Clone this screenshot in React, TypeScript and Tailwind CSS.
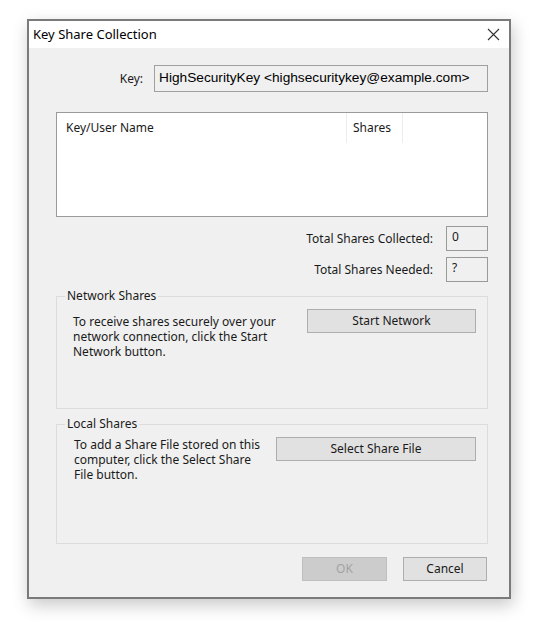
import React from 'react';

// Key share collection dialog (Windows style)

function GroupBox({ title, children, height }: { title: string; children: React.ReactNode; height: string }) {
  return (
    <div className={`relative border border-[#dcdcdc] ${height}`}>
      <span className="absolute -top-[9px] left-[8px] bg-[#f0f0f0] px-[2px] leading-[16px] text-[#1a1a1a]">
        {title}
      </span>
      {children}
    </div>
  );
}

function WinButton({ children, className = '', disabled = false }: { children: React.ReactNode; className?: string; disabled?: boolean }) {
  return (
    <button
      type="button"
      disabled={disabled}
      className={`h-[24px] border text-[12px] ${
        disabled
          ? 'border-[#bfbfbf] bg-[#cccccc] text-[#a3a3a3]'
          : 'border-[#adadad] bg-[#e1e1e1] text-[#1a1a1a]'
      } ${className}`}
    >
      {children}
    </button>
  );
}

export default function App() {
  return (
    <div
      className="min-h-[626px] w-[554px] bg-white pl-[27px] pt-[19px] text-[12px] text-[#1a1a1a]"
      style={{ fontFamily: '"Noto Sans", "Open Sans", sans-serif' }}
    >
      <div className="flex h-[580px] w-[484px] flex-col border-2 border-[#7a7a7a] bg-[#f0f0f0] shadow-[2px_6px_16px_rgba(0,0,0,0.22)]">
        {/* Title bar */}
        <div className="flex h-[27px] items-center justify-between bg-white pl-[4px] pr-[9px]">
          <span className="text-[13px] text-black">Key Share Collection</span>
          <svg width="13" height="13" viewBox="0 0 13 13" className="text-[#333]">
            <path d="M1 1L12 12M12 1L1 12" stroke="currentColor" strokeWidth="1.1" fill="none" />
          </svg>
        </div>

        {/* Body */}
        <div className="flex flex-1 flex-col pl-[27px] pr-[21px]">
          <div className="mt-[17px] flex items-center gap-[11px]">
            <span className="w-[87px] text-right">Key:</span>
            <div
              className="flex h-[27px] flex-1 items-center border border-[#a0a0a0] bg-[#f0f0f0] pl-[4px] text-[13.7px] text-black"
              style={{ fontFamily: '"Liberation Sans", Arial, sans-serif' }}
            >
              HighSecurityKey &lt;highsecuritykey@example.com&gt;
            </div>
          </div>

          {/* List view */}
          <div className="mt-[20px] h-[105px] border border-[#9a9a9a] bg-white">
            <div className="flex h-[30px] items-center">
              <div className="flex h-full w-[290px] items-center border-r border-[#ececec] pl-[9px]">Key/User Name</div>
              <div className="flex h-full w-[56px] items-center border-r border-[#ececec] pl-[6px]">Shares</div>
            </div>
          </div>

          {/* Counts */}
          <div className="mt-[9px] flex items-center justify-end gap-[13px]">
            <span>Total Shares Collected:</span>
            <div className="h-[25px] w-[42px] border border-[#9a9a9a] bg-[#f0f0f0] pl-[5px] pt-[2px] leading-[16px]">0</div>
          </div>
          <div className="mt-[6px] flex items-center justify-end gap-[13px]">
            <span>Total Shares Needed:</span>
            <div className="h-[25px] w-[42px] border border-[#9a9a9a] bg-[#f0f0f0] pl-[5px] pt-[2px] leading-[16px]">?</div>
          </div>

          {/* Network shares */}
          <div className="mt-[14px]">
            <GroupBox title="Network Shares" height="h-[113px]">
              <div className="flex pl-[16px] pr-[11px] pt-[12px]">
                <p className="mt-[5px] w-[220px] leading-[15px]">
                  To receive shares securely over your network connection, click the Start Network button.
                </p>
                <WinButton className="ml-auto w-[169px]">Start Network</WinButton>
              </div>
            </GroupBox>
          </div>

          {/* Local shares */}
          <div className="mt-[15px]">
            <GroupBox title="Local Shares" height="h-[120px]">
              <div className="flex pl-[17px] pr-[11px] pt-[12px]">
                <p className="w-[190px] leading-[15px]">
                  To add a Share File stored on this computer, click the Select Share File button.
                </p>
                <WinButton className="ml-auto w-[200px]">Select Share File</WinButton>
              </div>
            </GroupBox>
          </div>

          {/* Dialog buttons */}
          <div className="mt-[13px] flex justify-end gap-[16px] pr-[1px]">
            <WinButton disabled className="w-[85px]">OK</WinButton>
            <WinButton className="w-[84px]">Cancel</WinButton>
          </div>
        </div>
      </div>
    </div>
  );
}
